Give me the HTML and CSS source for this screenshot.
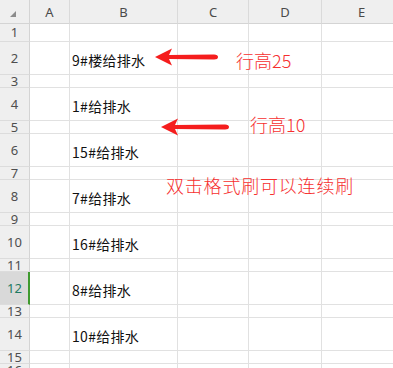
FILE: index.html
```html
<!DOCTYPE html>
<html>
<head>
<meta charset="utf-8">
<link rel="stylesheet" href="styles.css">
</head>
<body>
<div class="sheet">
  <div class="grid">
    <div class="hd corner"><span class="tri"></span></div>
    <div class="hd col">A</div><div class="hd col">B</div><div class="hd col">C</div><div class="hd col">D</div><div class="hd col last">E</div>

    <div class="rh">1</div><div class="c"></div><div class="c"></div><div class="c"></div><div class="c"></div><div class="c"></div>
    <div class="rh">2</div><div class="c"></div><div class="c t">9#楼给排水</div><div class="c"></div><div class="c"></div><div class="c"></div>
    <div class="rh">3</div><div class="c"></div><div class="c"></div><div class="c"></div><div class="c"></div><div class="c"></div>
    <div class="rh">4</div><div class="c"></div><div class="c t">1#给排水</div><div class="c"></div><div class="c"></div><div class="c"></div>
    <div class="rh">5</div><div class="c"></div><div class="c"></div><div class="c"></div><div class="c"></div><div class="c"></div>
    <div class="rh">6</div><div class="c"></div><div class="c t">15#给排水</div><div class="c"></div><div class="c"></div><div class="c"></div>
    <div class="rh">7</div><div class="c"></div><div class="c"></div><div class="c"></div><div class="c"></div><div class="c"></div>
    <div class="rh">8</div><div class="c"></div><div class="c t">7#给排水</div><div class="c"></div><div class="c"></div><div class="c"></div>
    <div class="rh">9</div><div class="c"></div><div class="c"></div><div class="c"></div><div class="c"></div><div class="c"></div>
    <div class="rh">10</div><div class="c"></div><div class="c t">16#给排水</div><div class="c"></div><div class="c"></div><div class="c"></div>
    <div class="rh">11</div><div class="c"></div><div class="c"></div><div class="c"></div><div class="c"></div><div class="c"></div>
    <div class="rh sel">12</div><div class="c"></div><div class="c t">8#给排水</div><div class="c"></div><div class="c"></div><div class="c"></div>
    <div class="rh">13</div><div class="c"></div><div class="c"></div><div class="c"></div><div class="c"></div><div class="c"></div>
    <div class="rh">14</div><div class="c"></div><div class="c t">10#给排水</div><div class="c"></div><div class="c"></div><div class="c"></div>
    <div class="rh">15</div><div class="c"></div><div class="c"></div><div class="c"></div><div class="c"></div><div class="c"></div>
    <div class="rh">16</div><div class="c"></div><div class="c"></div><div class="c"></div><div class="c"></div><div class="c"></div>
  </div>

  <svg class="arrow a1" width="70" height="20" viewBox="0 0 70 20">
    <path d="M0 10 L17 1.5 L14 8 L59 7.5 Q63 7.5 63 10 Q63 12.5 59 12.5 L14 12 L17 18.5 Z" fill="#f51d1d"/>
  </svg>
  <svg class="arrow a2" width="74" height="20" viewBox="0 0 74 20">
    <path d="M0 10 L17 1.5 L14 8 L64 7.5 Q68 7.5 68 10 Q68 12.5 64 12.5 L14 12 L17 18.5 Z" fill="#f51d1d"/>
  </svg>
  <div class="note n1">行高25</div>
  <div class="note n2">行高10</div>
  <div class="note n3">双击格式刷可以连续刷</div>
</div>
</body>
</html>
```
FILE: styles.css
```css
* { box-sizing: border-box; }
html, body { margin: 0; padding: 0; background: #fff; }
body { font-family: "Noto Sans", "Noto Sans CJK SC", sans-serif; }
.sheet { position: relative; width: 393px; height: 368px; overflow: hidden; }
.grid {
  display: grid;
  grid-template-columns: 30px 40px 108px 71px 73px 80px;
  grid-template-rows: 24px 18px 33px 13px 33px 13px 33px 13px 33px 13px 33px 13px 33px 13px 33px 13px 13px;
}
.hd {
  background: #efefef;
  border-right: 1px solid #dadada;
  border-bottom: 1px solid #d4d4d4;
  color: #4a4a4a;
  font-size: 13px;
  display: flex;
  align-items: center;
  justify-content: center;
  padding-top: 1px;
}
.corner { position: relative; border-right: 1px solid #d4d4d4; }
.tri {
  position: absolute;
  left: 10px;
  top: 11px;
  width: 0; height: 0;
  border-left: 6px solid transparent;
  border-bottom: 6px solid #8c8c8c;
}
.rh {
  background: #efefef;
  border-right: 1px solid #d4d4d4;
  border-bottom: 1px solid #dcdcdc;
  color: #4e4e4e;
  font-size: 13px;
  line-height: 1;
  display: flex;
  align-items: center;
  justify-content: center;
  overflow: hidden;
}
.rh.sel {
  background: #d9d9d9;
  color: #1e7a62;
  border-right: 2px solid #3f9a2f;
  padding-left: 1px;
}
.c {
  border-right: 1px solid #e1e1e1;
  border-bottom: 1px solid #e1e1e1;
}
.t {
  font-family: "Noto Sans CJK SC", sans-serif;
  font-size: 14px;
  color: #111;
  display: flex;
  align-items: center;
  padding-left: 2px;
  padding-top: 3px;
  white-space: nowrap;
  letter-spacing: 0.3px;
}
.arrow { position: absolute; }
.a1 { left: 155px; top: 47px; }
.a2 { left: 161px; top: 117px; }
.note {
  position: absolute;
  color: #f62f2f;
  font-family: "Noto Sans CJK SC", sans-serif;
  font-weight: 300;
  font-size: 18px;
  line-height: 20px;
  white-space: nowrap;
}
.n1 { left: 236px; top: 50px; }
.n2 { left: 250px; top: 114px; }
.n3 { left: 166px; top: 175px; letter-spacing: 0.8px; }
```
